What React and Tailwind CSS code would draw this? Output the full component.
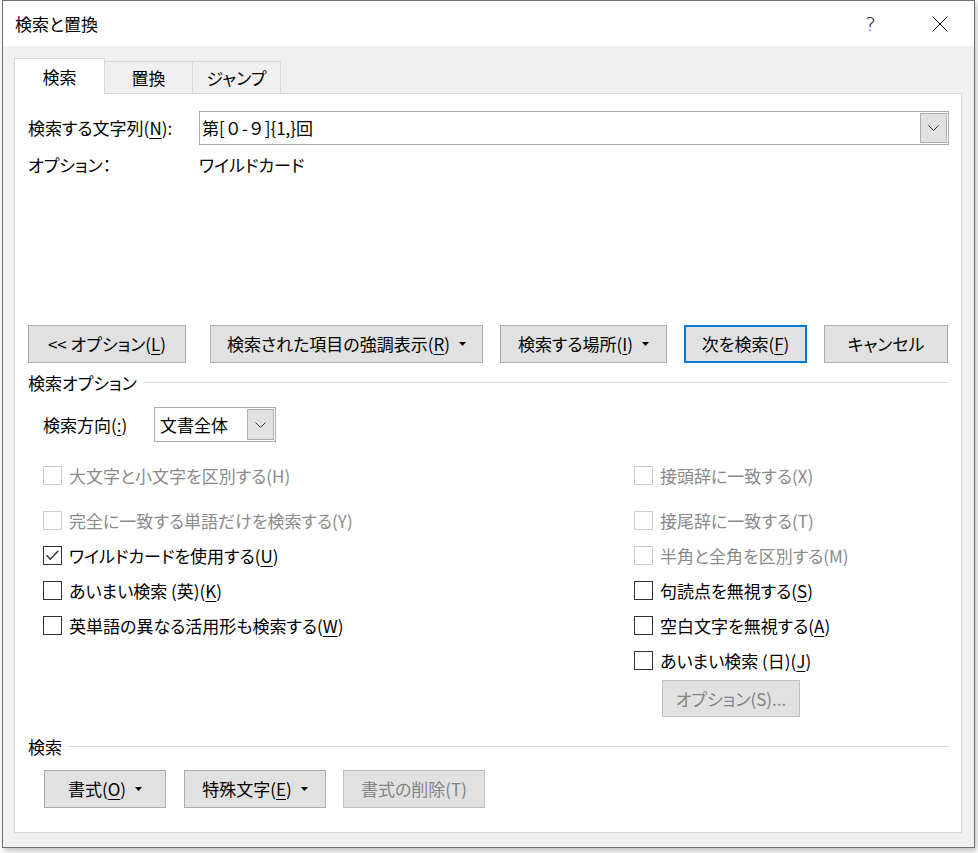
import React from "react";

function Caret() {
  return (
    <svg width="7" height="4" viewBox="0 0 7 4" className="shrink-0">
      <path d="M0 0h7L3.5 4z" fill="#000" />
    </svg>
  );
}

function Chevron() {
  return (
    <svg width="11" height="6" viewBox="0 0 11 6">
      <path d="M0.5 0.5L5.5 5.5L10.5 0.5" fill="none" stroke="#3c3c3c" strokeWidth="1" />
    </svg>
  );
}

function Btn({ children, className = "", disabled, primary }) {
  return (
    <button
      className={`h-[38px] flex items-center justify-center gap-[9px] bg-[#e1e1e1] shrink-0 ${
        primary ? "border-2 border-[#0078d7]" : "border border-[#adadad]"
      } ${disabled ? "text-[#838383] border-[#bfbfbf]" : "text-black"} ${className}`}
    >
      {children}
    </button>
  );
}

function Check({ label, checked, disabled, className = "" }) {
  return (
    <div className={`h-[35px] flex items-center gap-[7px] ${className}`}>
      <div
        className={`w-[19px] h-[19px] bg-white border shrink-0 ${
          disabled ? "border-[#cccccc]" : "border-[#333333]"
        }`}
      >
        {checked && (
          <svg width="17" height="17" viewBox="0 0 17 17">
            <path d="M2.5 8.3L6.3 12.2L14.3 3.7" fill="none" stroke="#333" strokeWidth="1.4" />
          </svg>
        )}
      </div>
      <span className={disabled ? "text-[#8a8a8a]" : "text-black"}>{label}</span>
    </div>
  );
}

function Key({ children }) {
  return <u className="underline underline-offset-[3px] decoration-1">{children}</u>;
}

function GroupLabel({ children, className = "" }) {
  return (
    <div className={`h-[22px] flex items-center ${className}`}>
      <span>{children}</span>
      <div className="flex-1 h-px bg-[#dcdcdc] ml-[6px] -mt-[2px]" />
    </div>
  );
}

export default function App() {
  return (
    <div className="w-[978px] h-[853px] bg-white font-['Noto_Sans_CJK_JP',sans-serif] text-[17px] leading-[22px] text-black [font-feature-settings:'palt']">
      <div className="ml-[2px] w-[973px] h-[848px] border border-[#707070] flex flex-col shadow-[2px_3px_6px_rgba(0,0,0,0.25)]">
        {/* Title bar */}
        <div className="h-[45px] bg-white flex items-center pl-[12px] shrink-0">
          <span className="text-[17px]">検索と置換</span>
          <div className="ml-auto flex h-full">
            <div className="w-[69px] h-full flex items-center justify-center text-[20px] font-['DejaVu_Sans',sans-serif] font-light">
              ?
            </div>
            <div className="w-[69px] h-full flex items-center justify-center">
              <svg width="16" height="16" viewBox="0 0 16 16">
                <path d="M0.5 0.5L15.5 15.5M15.5 0.5L0.5 15.5" stroke="#000" strokeWidth="1" />
              </svg>
            </div>
          </div>
        </div>

        {/* Body */}
        <div className="flex-1 bg-[#f0f0f0] pt-[12px] pl-[11px] pr-[12px] pb-[14px] flex flex-col">
          {/* Tabs */}
          <div className="h-[35px] flex items-end shrink-0">
            <div className="relative z-10 -mb-px h-[36px] w-[91px] bg-white border border-b-0 border-[#d9d9d9] flex items-center justify-center">
              検索
            </div>
            <div className="h-[32px] w-[88px] border border-l-0 border-b-0 border-[#d9d9d9] flex items-center justify-center">
              置換
            </div>
            <div className="h-[32px] w-[88px] border border-l-0 border-b-0 border-[#d9d9d9] flex items-center justify-center">
              ジャンプ
            </div>
          </div>

          {/* Panel */}
          <div className="flex-1 bg-white border border-[#d9d9d9] pl-[13px] pr-[12px] flex flex-col">
            <div className="mt-[17px] h-[34px] flex items-center">
              <div className="w-[171px] shrink-0">
                検索する文字列(<Key>N</Key>):
              </div>
              <div className="flex-1 h-[34px] border border-[#a9a9a9] flex items-center pl-[2px]">
                <span className="flex-1 [font-feature-settings:normal]">
                  第[０-９]{"{1,}"}回
                </span>
                <div className="w-[27px] h-[30px] mr-px bg-[#e1e1e1] border border-[#adadad] flex items-center justify-center">
                  <Chevron />
                </div>
              </div>
            </div>

            <div className="mt-[9px] h-[22px] flex items-center">
              <div className="w-[171px] shrink-0">オプション：</div>
              <div>ワイルドカード</div>
            </div>

            {/* Main buttons */}
            <div className="mt-[149px] flex">
              <Btn className="w-[158px]">
                <span>
                  &lt;&lt; オプション(<Key>L</Key>)
                </span>
              </Btn>
              <Btn className="w-[273px] ml-[24px]">
                <span>
                  検索された項目の強調表示(<Key>R</Key>)
                </span>
                <Caret />
              </Btn>
              <Btn className="w-[167px] ml-[17px]">
                <span>
                  検索する場所(<Key>I</Key>)
                </span>
                <Caret />
              </Btn>
              <Btn primary className="w-[123px] ml-[17px]">
                <span>
                  次を検索(<Key>F</Key>)
                </span>
              </Btn>
              <Btn className="w-[124px] ml-[17px]">
                <span>キャンセル</span>
              </Btn>
            </div>

            <GroupLabel className="mt-[9px]">検索オプション</GroupLabel>

            <div className="mt-[13px] pl-[15px] flex items-center h-[35px]">
              <div className="w-[111px] shrink-0">
                検索方向(<Key>:</Key>)
              </div>
              <div className="w-[122px] h-[35px] border border-[#a9a9a9] flex items-center pl-[5px]">
                <span className="flex-1">文書全体</span>
                <div className="w-[27px] h-[31px] mr-px bg-[#e1e1e1] border border-[#adadad] flex items-center justify-center">
                  <Chevron />
                </div>
              </div>
            </div>

            {/* Checkboxes */}
            <div className="mt-[16px] flex">
              <div className="w-[606px] pl-[15px] shrink-0 flex flex-col">
                <Check disabled label="大文字と小文字を区別する(H)" />
                <Check disabled className="mt-[10px]" label="完全に一致する単語だけを検索する(Y)" />
                <Check checked label={<>ワイルドカードを使用する(<Key>U</Key>)</>} />
                <Check label={<>あいまい検索 (英)(<Key>K</Key>)</>} />
                <Check label={<>英単語の異なる活用形も検索する(<Key>W</Key>)</>} />
              </div>
              <div className="flex-1 flex flex-col">
                <Check disabled label="接頭辞に一致する(X)" />
                <Check disabled className="mt-[10px]" label="接尾辞に一致する(T)" />
                <Check disabled label="半角と全角を区別する(M)" />
                <Check label={<>句読点を無視する(<Key>S</Key>)</>} />
                <Check label={<>空白文字を無視する(<Key>A</Key>)</>} />
                <Check label={<>あいまい検索 (日)(<Key>J</Key>)</>} />
                <div className="mt-[2px] ml-[28px]">
                  <Btn disabled className="w-[138px] !h-[37px]">
                    <span>オプション(S)...</span>
                  </Btn>
                </div>
              </div>
            </div>

            <GroupLabel className="mt-[19px]">検索</GroupLabel>

            <div className="mt-[12px] pl-[16px] flex">
              <Btn className="w-[122px]">
                <span>
                  書式(<Key>O</Key>)
                </span>
                <Caret />
              </Btn>
              <Btn className="w-[142px] ml-[18px]">
                <span>
                  特殊文字(<Key>E</Key>)
                </span>
                <Caret />
              </Btn>
              <Btn disabled className="w-[142px] ml-[17px]">
                <span>書式の削除(T)</span>
              </Btn>
            </div>
          </div>
        </div>
      </div>
    </div>
  );
}
